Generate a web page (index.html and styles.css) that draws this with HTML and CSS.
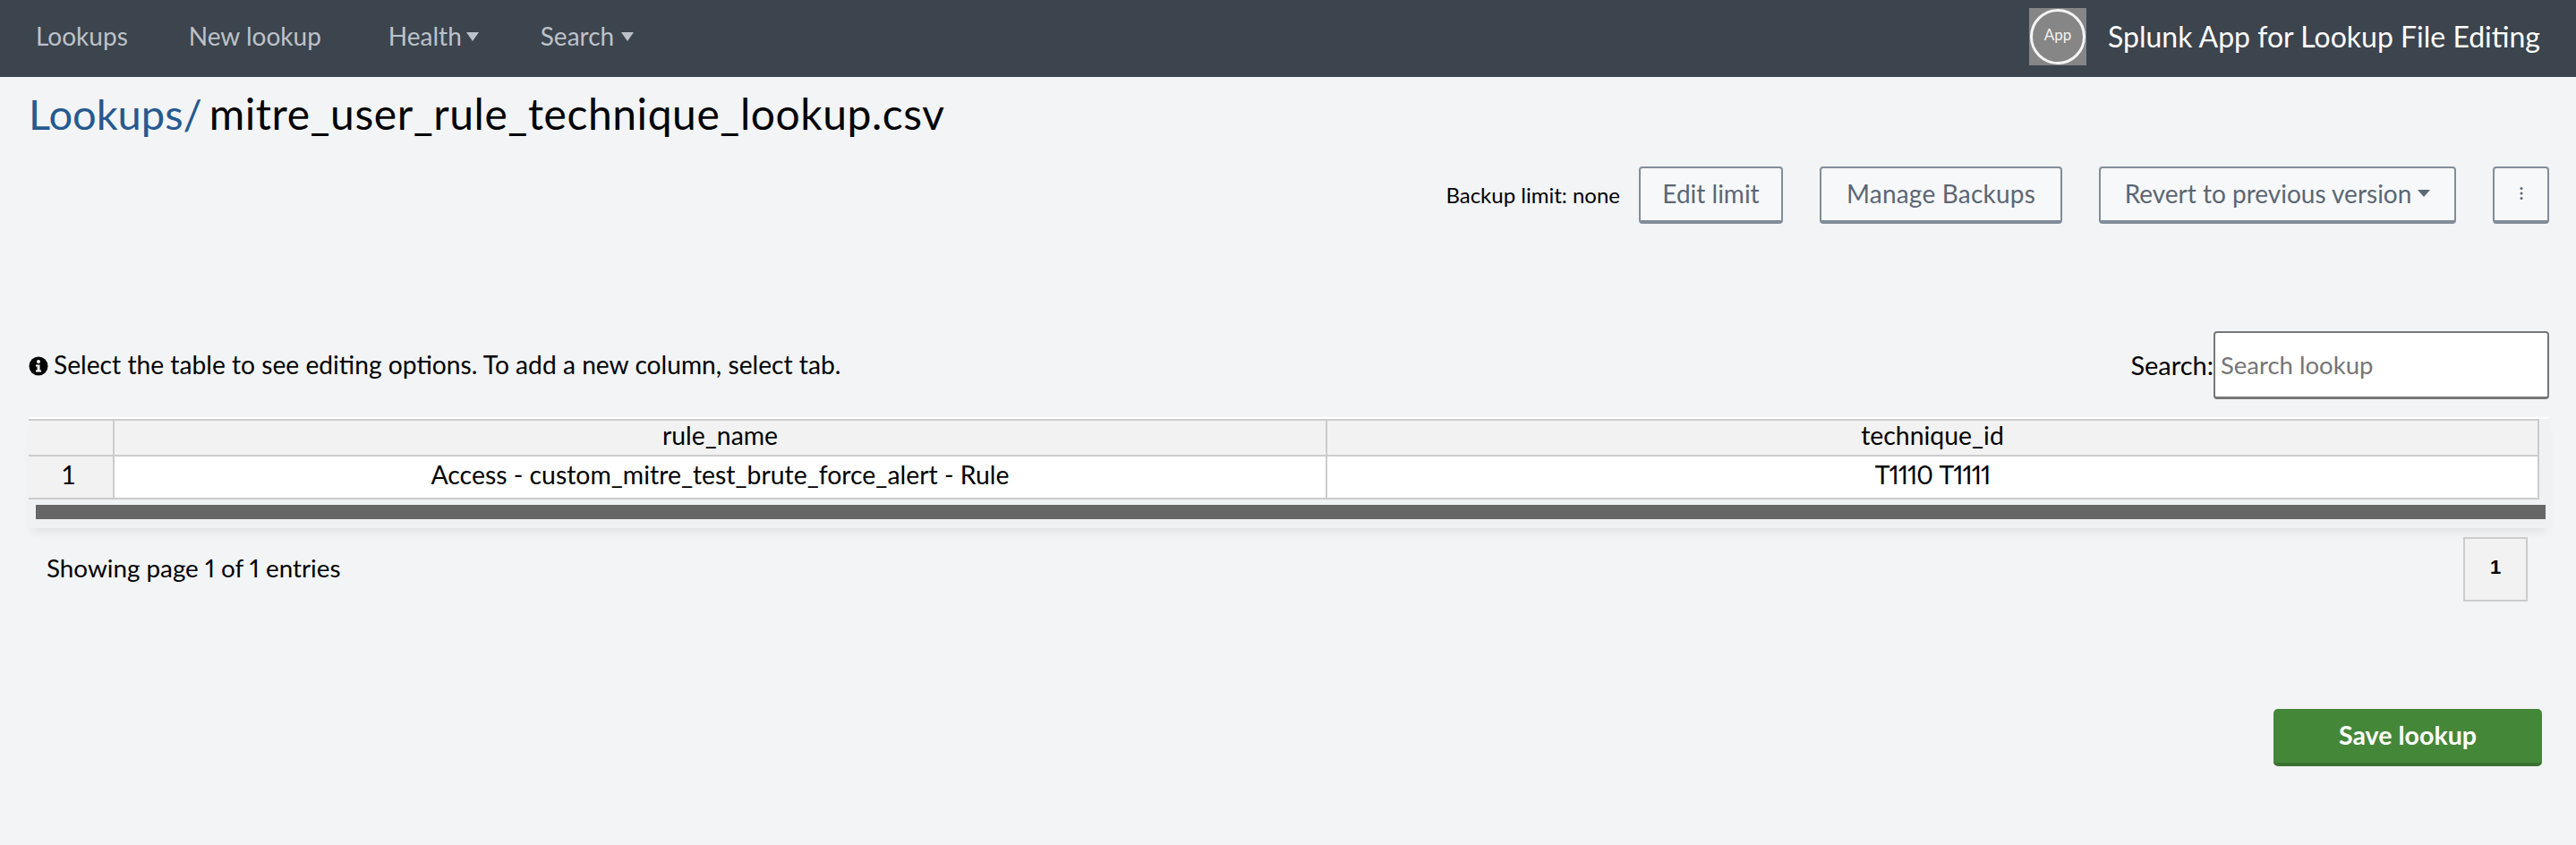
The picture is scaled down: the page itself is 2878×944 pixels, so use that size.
FILE: index.html
```html
<!DOCTYPE html>
<html lang="en">
<head>
<meta charset="utf-8">
<title>mitre_user_rule_technique_lookup.csv</title>
<link rel="stylesheet" href="styles.css">
</head>
<body>
<nav class="nav">
  <ul class="nav-links">
    <li class="nav-lookups">Lookups</li>
    <li class="nav-new">New lookup</li>
    <li class="nav-health">Health<span class="caret"></span></li>
    <li class="nav-search">Search<span class="caret"></span></li>
  </ul>
  <div class="brand">
    <svg class="logo" width="64" height="64" viewBox="0 0 64 64" aria-hidden="true">
      <rect width="64" height="64" fill="#868686"/>
      <circle cx="32" cy="32" r="29.5" fill="none" stroke="#f4f4f4" stroke-width="3"/>
      <text x="32" y="36" text-anchor="middle" class="logo-text">App</text>
    </svg>
    <span class="brand-name">Splunk App for Lookup File Editing</span>
  </div>
</nav>
<main class="main">
  <h1 class="title"><a class="crumb">Lookups/</a><span class="file">mitre_user_rule_technique_lookup.csv</span></h1>
  <div class="actions">
    <span class="limit">Backup limit: none</span>
    <button class="btn btn-edit">Edit limit</button>
    <button class="btn btn-manage">Manage Backups</button>
    <button class="btn btn-revert">Revert to previous version<span class="caret caret-small"></span></button>
    <button class="btn btn-more" aria-label="More">
      <svg width="4" height="16" viewBox="0 0 4 16" aria-hidden="true"><circle cx="2" cy="2.5" r="1.5" fill="#5c6773"/><circle cx="2" cy="8" r="1.5" fill="#5c6773"/><circle cx="2" cy="13.5" r="1.5" fill="#5c6773"/></svg>
    </button>
  </div>
  <div class="toolbar">
    <p class="hint">
      <svg class="info" width="22" height="22" viewBox="0 0 22 22" aria-hidden="true"><circle cx="11" cy="11" r="10.5" fill="#000"/><circle cx="11" cy="6" r="2" fill="#fff"/><path d="M8 9.5h4.5v6H14v2H8v-2h1.6v-4H8z" fill="#fff"/></svg>
      Select the table to see editing options. To add a new column, select tab.
    </p>
    <label class="search">Search:<input class="search-input" type="text" placeholder="Search lookup"></label>
  </div>
  <div class="grid-wrap">
    <table class="grid">
      <colgroup><col class="col-index"><col class="col-rule"><col></colgroup>
      <thead><tr><th></th><th>rule_name</th><th>technique_id</th></tr></thead>
      <tbody><tr><th>1</th><td>Access - custom_mitre_test_brute_force_alert - Rule</td><td class="ids">T1110 T1111</td></tr></tbody>
    </table>
    <div class="scrollbar"></div>
  </div>
  <div class="pager">
    <span class="entries">Showing page 1 of 1 entries</span>
    <span class="page">1</span>
  </div>
  <div class="save-row"><button class="save">Save lookup</button></div>
</main>
</body>
</html>
```
FILE: styles.css
```css
* { box-sizing: border-box; }
html, body { margin: 0; padding: 0; }
body {
  background: #f2f4f6;
  color: #000;
  font-family: Lato, "Liberation Sans", sans-serif;
  font-size: 28px;
  height: 944px;
  overflow: hidden;
}
.nav {
  height: 86px;
  background: #3c444d;
  display: flex;
  align-items: center;
  justify-content: space-between;
  padding: 0 40px 4px;
}
.nav-links {
  list-style: none;
  margin: 0;
  padding: 0 0 2px;
  display: flex;
  color: #bcc2ca;
  font-size: 28px;
}
.nav-lookups { margin-right: 68px; }
.nav-new { margin-right: 75px; }
.nav-health { margin-right: 69px; }
.nav-search .caret { margin-left: 8px; }
.caret {
  display: inline-block;
  width: 0;
  height: 0;
  margin-left: 5px;
  vertical-align: 5px;
  border-left: 7.5px solid transparent;
  border-right: 7.5px solid transparent;
  border-top: 10px solid currentColor;
}
.caret-small {
  margin-left: 7px;
  vertical-align: 3px;
  border-left-width: 7px;
  border-right-width: 7px;
  border-top-width: 8px;
}
.brand { display: flex; align-items: center; }
.logo { display: block; margin-right: 24px; }
.logo-text { font-family: Lato, sans-serif; font-size: 17px; fill: #f2f2f2; }
.brand-name { color: #fff; font-size: 32px; padding-bottom: 2px; }
.main { padding: 0 30px 0 32px; }
.title {
  margin: 0;
  height: 100px;
  padding-top: 13px;
  font-size: 47px;
  line-height: 56px;
  font-weight: 400;
}
.crumb { color: #26598f; margin-right: 8px; }
.file { color: #000; font-size: 48px; letter-spacing: 0.55px; }
.actions {
  display: flex;
  align-items: center;
  justify-content: flex-end;
  height: 64px;
}
.limit { font-size: 24px; margin-right: 21px; padding-bottom: 2px; }
.btn {
  height: 64px;
  font: inherit;
  font-size: 28px;
  color: #5c6773;
  background: #f7f8fa;
  border: 2px solid #818d99;
  border-bottom-width: 4px;
  border-radius: 4px;
  padding: 0 0 3px;
  display: flex;
  align-items: center;
  justify-content: center;
}
.btn-edit { width: 161px; margin-right: 41px; }
.btn-manage { width: 271px; margin-right: 41px; letter-spacing: 0.2px; }
.btn-revert { width: 399px; margin-right: 41px; }
.btn-more { width: 63px; }
.toolbar {
  display: flex;
  align-items: center;
  justify-content: space-between;
  height: 76px;
  margin-top: 120px;
}
.hint { margin: 0; display: flex; align-items: center; font-size: 28.2px; padding-bottom: 3px; }
.info { margin-right: 6px; margin-top: 5px; }
.search { display: flex; align-items: center; font-size: 29px; line-height: 34px; }
.search-input {
  width: 375px;
  height: 76px;
  font: inherit;
  font-size: 27.5px;
  border: 2px solid #777;
  border-bottom-width: 3px;
  border-radius: 4px;
  padding: 0 6px;
  background: #fff;
  outline: none;
}
.search-input::placeholder { color: #757575; opacity: 1; }
.grid-wrap {
  margin-top: 20px;
  width: 2816px;
  height: 124px;
  box-shadow: 0 8px 10px -4px rgba(0, 0, 0, 0.08);
  background: #f0f1f3;
  border-top: 2px solid #fff;
}
.grid {
  width: 2805px;
  table-layout: fixed;
  border-collapse: collapse;
  font-size: 28.4px;
  background: #fff;
  border-bottom: 2px solid #ccc;
  border-right: 2px solid #ccc;
}
.col-index { width: 95px; }
.col-rule { width: 1355px; }
.grid th, .grid td {
  padding: 0 0 6px;
  line-height: 30px;
  text-align: center;
  font-weight: 400;
  border-top: 2px solid #ccc;
  border-left: 2px solid #ccc;
}
.grid th:first-child { border-left: 0; padding-right: 5px; }
.grid th { background: #f2f2f2; }
.grid thead th { height: 40px; }
.grid tbody th, .grid td { height: 48px; }
.grid .ids { font-variant-numeric: proportional-nums; letter-spacing: -1px; word-spacing: 2px; }
.scrollbar {
  margin: 6px 4px 0 8px;
  height: 16px;
  background: #666;
}
.pager {
  display: flex;
  align-items: center;
  justify-content: space-between;
  margin-top: 10px;
  padding: 0 24px 0 20px;
  height: 72px;
}
.entries { font-size: 27.8px; font-variant-numeric: proportional-nums; padding-bottom: 4px; }
.page {
  width: 72px;
  height: 72px;
  display: flex;
  align-items: center;
  justify-content: center;
  background: #f2f2f2;
  border: 2px solid #ccc;
  font-family: "Liberation Sans", sans-serif;
  font-size: 22px;
  font-weight: 700;
  padding-bottom: 4px;
}
.save-row {
  display: flex;
  justify-content: flex-end;
  margin-top: 120px;
  padding-right: 8px;
}
.save {
  width: 300px;
  height: 64px;
  font: inherit;
  font-size: 28.6px;
  font-weight: 700;
  color: #fff;
  background: #458739;
  border: 0;
  border-bottom: 4px solid #3a7230;
  border-radius: 5px;
  padding: 0 0 2px;
}
```
